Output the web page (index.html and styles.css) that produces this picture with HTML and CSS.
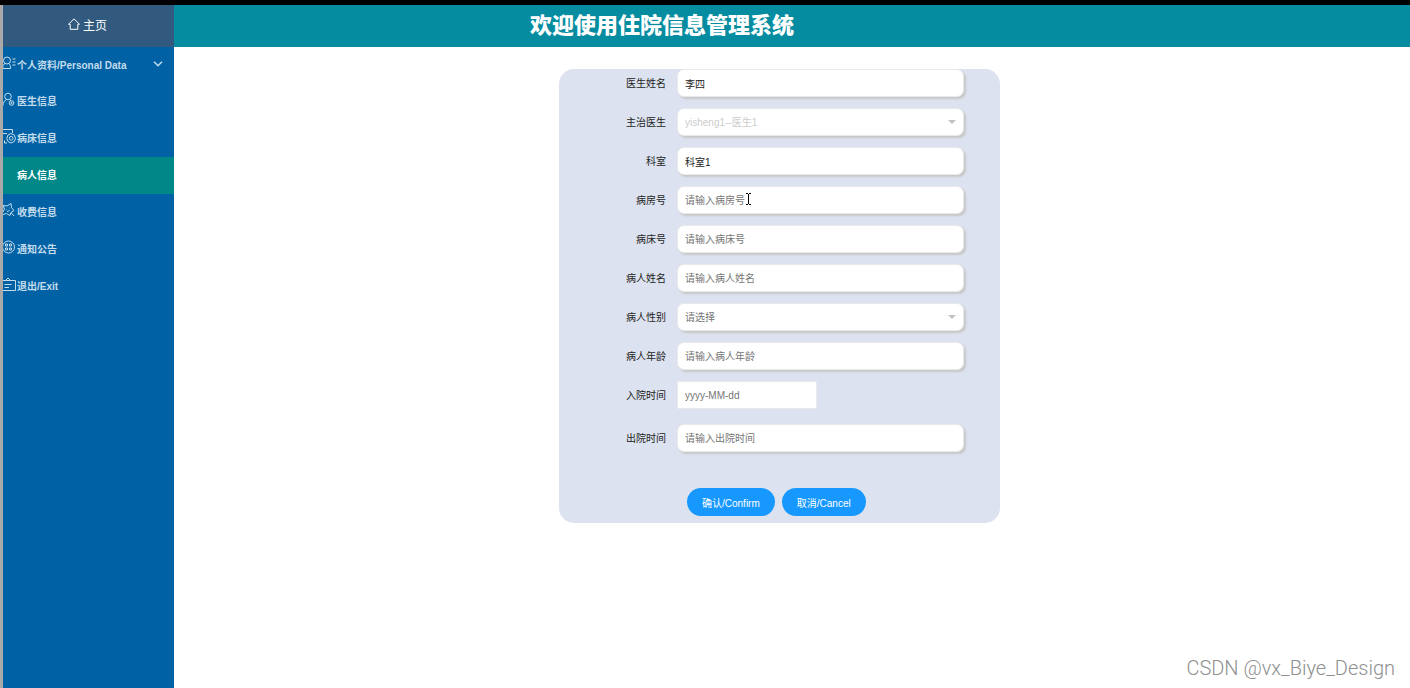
FILE: index.html
```html
<!DOCTYPE html>
<html lang="zh-CN">
<head>
  <meta charset="utf-8">
  <title>住院信息管理系统</title>
  <link rel="stylesheet" href="styles.css">
</head>
<body>
<div class="layout">
  <aside class="sidebar">
    <a href="#" class="home">
      <svg width="12" height="12" viewBox="0 0 12 12"><path d="M.5 6.3 6 .8l5.500 5.500H9.800V11.300H2.200V6.300z"/></svg>
      主页
    </a>
    <nav class="menu">
      <a href="#" class="parent">
        <svg class="icon" width="14" height="16" viewBox="0 0 14 16"><circle cx="4" cy="4.500" r="3.500"/><path d="M2 7.500C0 8.500-.5 10 0 12.500h7.500c.5-2.500-.5-4-2-5M9.500 3H12.500M9.500 6H12.500M9.500 9H12.500"/></svg>
        <span>个人资料/Personal Data</span>
        <svg class="arrow" width="10" height="6" viewBox="0 0 10 6"><path d="m1 .8 4 4 4-4"/></svg>
      </a>
      <a href="#">
        <svg class="icon" width="14" height="16" viewBox="0 0 14 16"><circle cx="5" cy="4.500" r="3.300"/><path d="M3.500 7.500C1.500 9 0 10.500 0 13.500M6.500 7.500l1.500 1.500"/><circle cx="8.500" cy="11" r="2.300"/><circle cx="8.500" cy="11" r=".7"/></svg>
        <span>医生信息</span>
      </a>
      <a href="#">
        <svg class="icon" width="14" height="16" viewBox="0 0 14 16"><path d="M-1 .5H9.500V4M-1 4.500H4M1.500 11.500V14H4M5 6 8 4.500 11.300 6l1.200 3.500-1.200 3L8 14l-3-1.500-1.200-3z"/><circle cx="8.200" cy="9.300" r="1.900"/></svg>
        <span>病床信息</span>
      </a>
      <a href="#" class="active">
        <span>病人信息</span>
      </a>
      <a href="#">
        <svg class="icon" width="14" height="16" viewBox="0 0 14 16"><path d="M0 2.500 4 3l4-2.500.5 4L11 7.500l-3 2-1 3-3.500-2L0 11.500M0 2.500 1.500 6 0 9M8 9.500l3 3.500M3.500 6.500h.5M6.500 5H7M4 8.500l2.500-1"/></svg>
        <span>收费信息</span>
      </a>
      <a href="#">
        <svg class="icon" width="14" height="16" viewBox="0 0 14 16"><circle cx="5.500" cy="7" r="6"/><path d="M2.500 4h2v2h-2zM6.500 4h2v2h-2zM2.500 8h2v2h-2zM6.500 8h2v2h-2z"/></svg>
        <span>通知公告</span>
      </a>
      <a href="#">
        <svg class="icon" width="14" height="16" viewBox="0 0 14 16"><path d="M-1 3.500H12.500V13.500H-1M2.500 3.500 5 1l2.500 2.500M1.500 7.500H8.500M1.500 10.500H6"/></svg>
        <span>退出/Exit</span>
      </a>
    </nav>
  </aside>
  <header class="topbar">
    <h1>欢迎使用住院信息管理系统</h1>
  </header>
  <main class="content">
    <form class="panel">
      <div class="row">
        <label for="doctorName">医生姓名</label>
        <input type="text" id="doctorName" value="李四">
      </div>
      <div class="row">
        <label for="doctor">主治医生</label>
        <div class="select">
          <select id="doctor" disabled><option>yisheng1--医生1</option></select>
        </div>
      </div>
      <div class="row">
        <label for="dept">科室</label>
        <input type="text" id="dept" value="科室1">
      </div>
      <div class="row">
        <label for="room">病房号</label>
        <div class="field">
          <input type="text" id="room" placeholder="请输入病房号">
          <svg class="cursor" width="5" height="12" viewBox="0 0 5 12"><path d="M0 .5h2M3 .5h2M2.500 1v10M0 11.500h2M3 11.500h2"/></svg>
        </div>
      </div>
      <div class="row">
        <label for="bed">病床号</label>
        <input type="text" id="bed" placeholder="请输入病床号">
      </div>
      <div class="row">
        <label for="patientName">病人姓名</label>
        <input type="text" id="patientName" placeholder="请输入病人姓名">
      </div>
      <div class="row">
        <label for="sex">病人性别</label>
        <div class="select">
          <select id="sex"><option>请选择</option><option>男</option><option>女</option></select>
        </div>
      </div>
      <div class="row">
        <label for="age">病人年龄</label>
        <input type="text" id="age" placeholder="请输入病人年龄">
      </div>
      <div class="row date">
        <label for="inDate">入院时间</label>
        <input type="text" id="inDate" placeholder="yyyy-MM-dd">
      </div>
      <div class="row">
        <label for="outDate">出院时间</label>
        <input type="text" id="outDate" placeholder="请输入出院时间">
      </div>
      <div class="buttons">
        <button type="button">确认/Confirm</button>
        <button type="button">取消/Cancel</button>
      </div>
    </form>
  </main>
</div>
<div class="watermark">CSDN @vx_Biye_Design</div>
</body>
</html>
```

FILE: styles.css
```css
* {
  box-sizing: border-box;
}
body {
  display: flex;
  flex-direction: column;
  min-height: 100vh;
  margin: 0;
  border-top: 5px solid #000;
  font: 10px "Liberation Sans", "Noto Sans CJK SC", sans-serif;
  color: #222;
  background: #fff;
}
svg {
  fill: none;
  stroke: currentColor;
}
input,
select,
button {
  font: inherit;
}
.layout {
  flex: 1;
  display: grid;
  grid-template-columns: 171px 1fr;
  grid-template-rows: 42px 1fr;
  border-left: 3px solid #a9a9a9;
}

/* sidebar */
.sidebar {
  grid-row: 1 / 3;
  background: #0062a5;
  overflow: hidden;
}
.home {
  display: flex;
  align-items: center;
  justify-content: center;
  gap: 3px;
  height: 42px;
  padding: 0 2px 4px 0;
  font-size: 12px;
  color: #fff;
  background: #315a7e;
  text-decoration: none;
}
.menu a {
  display: flex;
  align-items: center;
  height: 37px;
  padding: 0 11px 2px 14px;
  font-weight: bold;
  color: #c5dcec;
  text-decoration: none;
  position: relative;
}
.menu a.parent {
  height: 36px;
}
.menu a.active {
  color: #fff;
  background: #008888;
}
.icon {
  position: absolute;
  left: 0;
  top: 9px;
}
.arrow {
  margin-left: auto;
  stroke-width: 1.5;
}

/* top bar */
.topbar {
  display: flex;
  align-items: center;
  justify-content: center;
  padding: 0 260px 6px 0;
  background: #058ca0;
}
.topbar h1 {
  margin: 0;
  font: 900 22px/36px "Noto Sans CJK SC", sans-serif;
  color: #fff;
}

/* form */
.content {
  padding: 22px 25px 22px 0;
}
.panel {
  display: flex;
  flex-direction: column;
  gap: 11px;
  max-width: 441px;
  margin: 0 auto;
  padding: 0 36px 7px 0;
  border-radius: 15px;
  background: #dce2ef;
}
.row {
  display: grid;
  grid-template-columns: 107px 1fr;
  align-items: center;
  gap: 11px;
}
.row label {
  padding-bottom: 2px;
  text-align: right;
}
.row input,
.row select {
  display: block;
  width: 100%;
  height: 28px;
  padding: 0 7px;
  border: 1px solid #e9e9ec;
  border-radius: 7px;
  background: #fff;
  color: #222;
  box-shadow: 2px 2px 2px #c8c8c8;
  outline: none;
  appearance: none;
}
.row select {
  color: #757575;
}
.row select:disabled {
  color: #ccc;
  opacity: 1;
}
.row input::placeholder {
  color: #757575;
}
.row.date {
  margin-bottom: 4px;
}
.row.date input {
  width: 140px;
  border-radius: 0;
  box-shadow: none;
}
.field,
.select {
  position: relative;
}
.select::after {
  content: "";
  position: absolute;
  right: 8px;
  top: 12px;
  border: 4px solid transparent;
  border-top-color: #c2c2c2;
  pointer-events: none;
}
.cursor {
  position: absolute;
  left: 69px;
  top: 7px;
  stroke: #000;
}
.buttons {
  display: flex;
  gap: 7px;
  padding: 25px 0 0 128px;
}
.buttons button {
  height: 28px;
  padding: 0 15px;
  border: none;
  border-radius: 14px;
  color: #fff;
  background: #1698ff;
}

.watermark {
  position: absolute;
  right: 15px;
  bottom: 8px;
  font: 300 20px/24px Roboto, sans-serif;
  color: #8f8f8f;
}
```
